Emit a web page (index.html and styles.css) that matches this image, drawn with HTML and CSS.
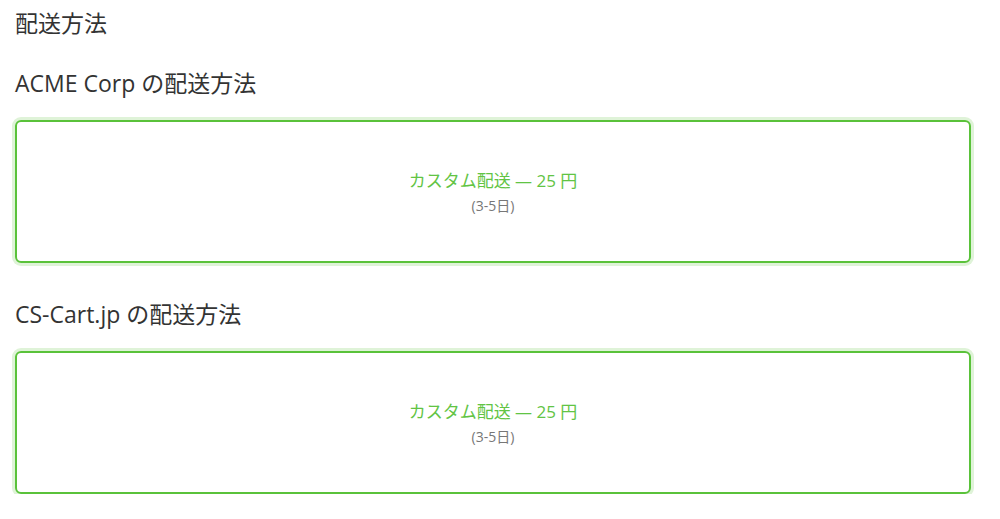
FILE: index.html
```html
<!DOCTYPE html>
<html lang="ja">
<head>
    <meta charset="UTF-8">
    <meta name="viewport" content="width=device-width, initial-scale=1.0">
    <title>配送方法</title>
    <link rel="stylesheet" href="styles.css">
</head>
<body>
    <div class="container">
        <h2 class="page-title">配送方法</h2>

        <div class="vendor">
            <h3 class="vendor-title">ACME Corp の配送方法</h3>
            <div class="shipping-option">
                <div class="shipping-name">カスタム配送 — 25 円</div>
                <div class="shipping-time">(3-5日)</div>
            </div>
        </div>

        <div class="vendor">
            <h3 class="vendor-title">CS-Cart.jp の配送方法</h3>
            <div class="shipping-option">
                <div class="shipping-name">カスタム配送 — 25 円</div>
                <div class="shipping-time">(3-5日)</div>
            </div>
        </div>
    </div>
</body>
</html>
```

FILE: styles.css
```css
body {
    margin: 0;
    font-family: 'Open Sans', 'Noto Sans CJK JP', sans-serif;
    background: white;
    color: #333;
}

.container {
    width: 956px;
    padding: 0 15px;
}

.page-title {
    margin: 0;
    padding-top: 8px;
    font-size: 23px;
    font-weight: normal;
    line-height: 30px;
}

.vendor {
    margin-top: 30px;
}

.vendor + .vendor {
    margin-top: 36px;
}

.vendor-title {
    margin: 0 0 22px 0;
    font-size: 23px;
    font-weight: normal;
    line-height: 30px;
}

.shipping-option {
    box-sizing: border-box;
    height: 143px;
    border: 2px solid #5ac23a;
    border-radius: 6px;
    box-shadow: 0 0 0 3px #dff3d8;
    display: flex;
    flex-direction: column;
    justify-content: center;
    align-items: center;
    text-align: center;
}

.shipping-name {
    color: #62c444;
    font-size: 17px;
    line-height: 28px;
}

.shipping-time {
    color: #777;
    font-size: 14px;
    line-height: 22px;
}
```
